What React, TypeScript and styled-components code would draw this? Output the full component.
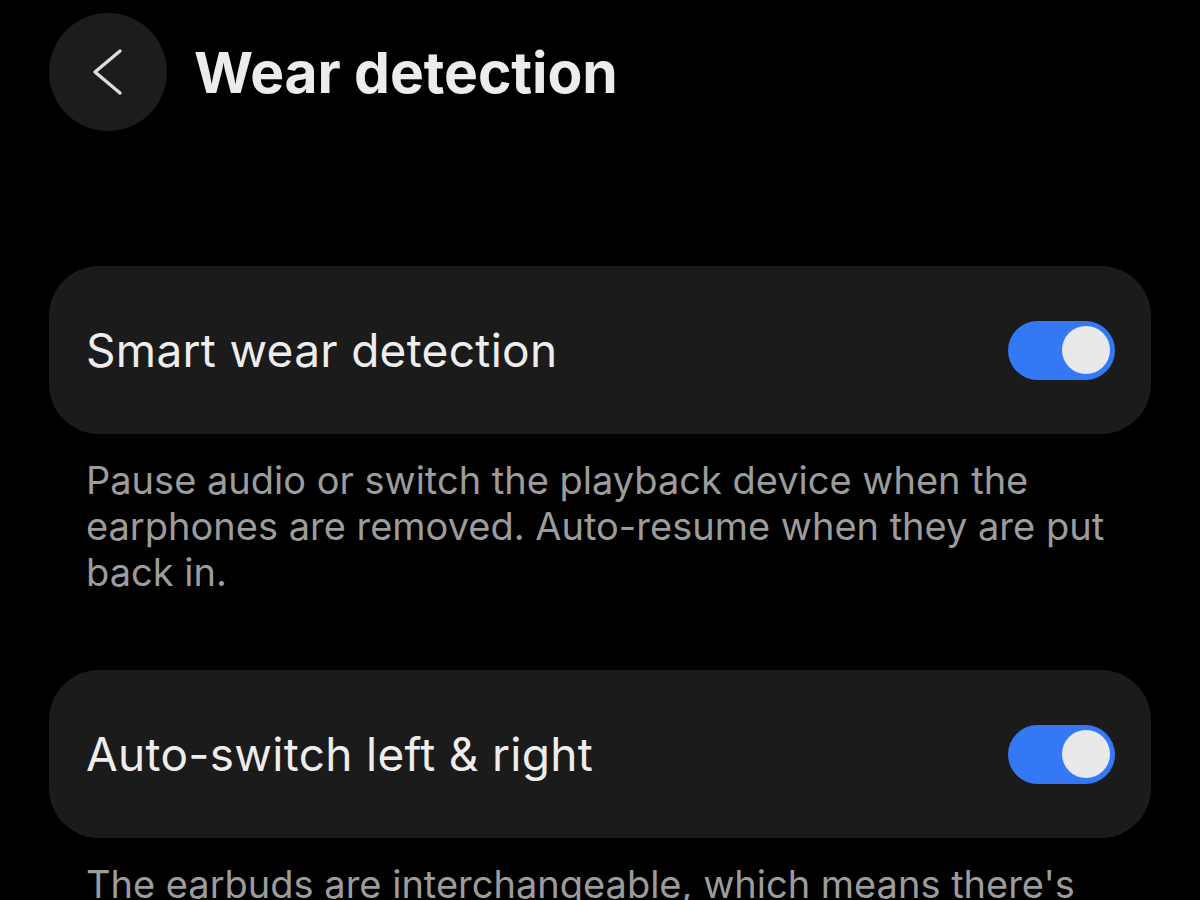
import React, { useState } from 'react';
import styled, { createGlobalStyle } from 'styled-components';

const GlobalStyle = createGlobalStyle`
  html, body {
    margin: 0;
    padding: 0;
    background: #000;
  }

  body {
    font-family: Inter, Roboto, "Liberation Sans", sans-serif;
    color: #f2f2f2;
  }
`;

type Setting = {
  id: string;
  title: string;
  description: string;
};

const settings: Setting[] = [
  {
    id: 'smart',
    title: 'Smart wear detection',
    description:
      'Pause audio or switch the playback device when the earphones are removed. Auto-resume when they are put back in.',
  },
  {
    id: 'swap',
    title: 'Auto-switch left & right',
    description:
      "The earbuds are interchangeable, which means there's no need to tell left from right when putting them in.",
  },
];

function Toggle({ on, onClick }: { on: boolean; onClick: () => void }) {
  return (
    <Track on={on} onClick={onClick} role="switch" aria-checked={on}>
      <Thumb />
    </Track>
  );
}

export default function App() {
  const [state, setState] = useState<Record<string, boolean>>({
    smart: true,
    swap: true,
  });

  const flip = (id: string) => setState((s) => ({ ...s, [id]: !s[id] }));

  return (
    <>
      <GlobalStyle />
      <Page>
        <Header>
          <BackButton aria-label="Back">
            <svg width="34" height="48" viewBox="0 0 34 48" fill="none">
              <path
                d="M29 3 L4 24 L29 45"
                stroke="#dcdcdc"
                strokeWidth="3.4"
                strokeLinecap="round"
                strokeLinejoin="round"
              />
            </svg>
          </BackButton>
          <Title>Wear detection</Title>
        </Header>

        <List>
          {settings.map((item) => (
            <Section key={item.id}>
              <Card>
                <CardTitle>{item.title}</CardTitle>
                <Toggle on={state[item.id]} onClick={() => flip(item.id)} />
              </Card>
              <Description>{item.description}</Description>
            </Section>
          ))}
        </List>
      </Page>
    </>
  );
}

// Styles
const Page = styled.div`
  width: 1200px;
  height: 900px;
  overflow: hidden;
  background: #000;
  padding: 13px 49px 0;
  box-sizing: border-box;
`;

const Header = styled.header`
  display: flex;
  align-items: center;
  gap: 27px;
`;

const BackButton = styled.button`
  width: 118px;
  height: 118px;
  border-radius: 50%;
  border: none;
  background: #1c1c1c;
  display: flex;
  align-items: center;
  justify-content: center;
  padding: 0;
  cursor: pointer;
`;

const Title = styled.h1`
  margin: 0;
  font-weight: 700;
  font-size: 57px;
  letter-spacing: -0.1px;
  color: #ececec;
`;

const List = styled.div`
  display: flex;
  flex-direction: column;
  gap: 75px;
  margin-top: 135px;
`;

const Section = styled.section`
  display: flex;
  flex-direction: column;
`;

const Card = styled.div`
  height: 168px;
  border-radius: 50px;
  background: #1b1b1b;
  display: flex;
  align-items: center;
  justify-content: space-between;
  padding: 0 36px 0 37px;
  box-sizing: border-box;
`;

const CardTitle = styled.span`
  font-size: 46px;
  font-weight: 400;
  letter-spacing: 0.3px;
  color: #ededed;
`;

const Track = styled.div<{ on: boolean }>`
  width: 107px;
  height: 59px;
  border-radius: 30px;
  background: ${(p) => (p.on ? '#3478f6' : '#5a5a5a')};
  display: flex;
  align-items: center;
  justify-content: ${(p) => (p.on ? 'flex-end' : 'flex-start')};
  padding: 0 5px;
  box-sizing: border-box;
  cursor: pointer;
`;

const Thumb = styled.div`
  width: 48px;
  height: 48px;
  border-radius: 50%;
  background: #e9e9e9;
`;

const Description = styled.p`
  margin: 23px 0 0;
  padding: 0 36px 0 37px;
  font-size: 38px;
  line-height: 46px;
  letter-spacing: 0;
  color: #9c9c9c;
`;
